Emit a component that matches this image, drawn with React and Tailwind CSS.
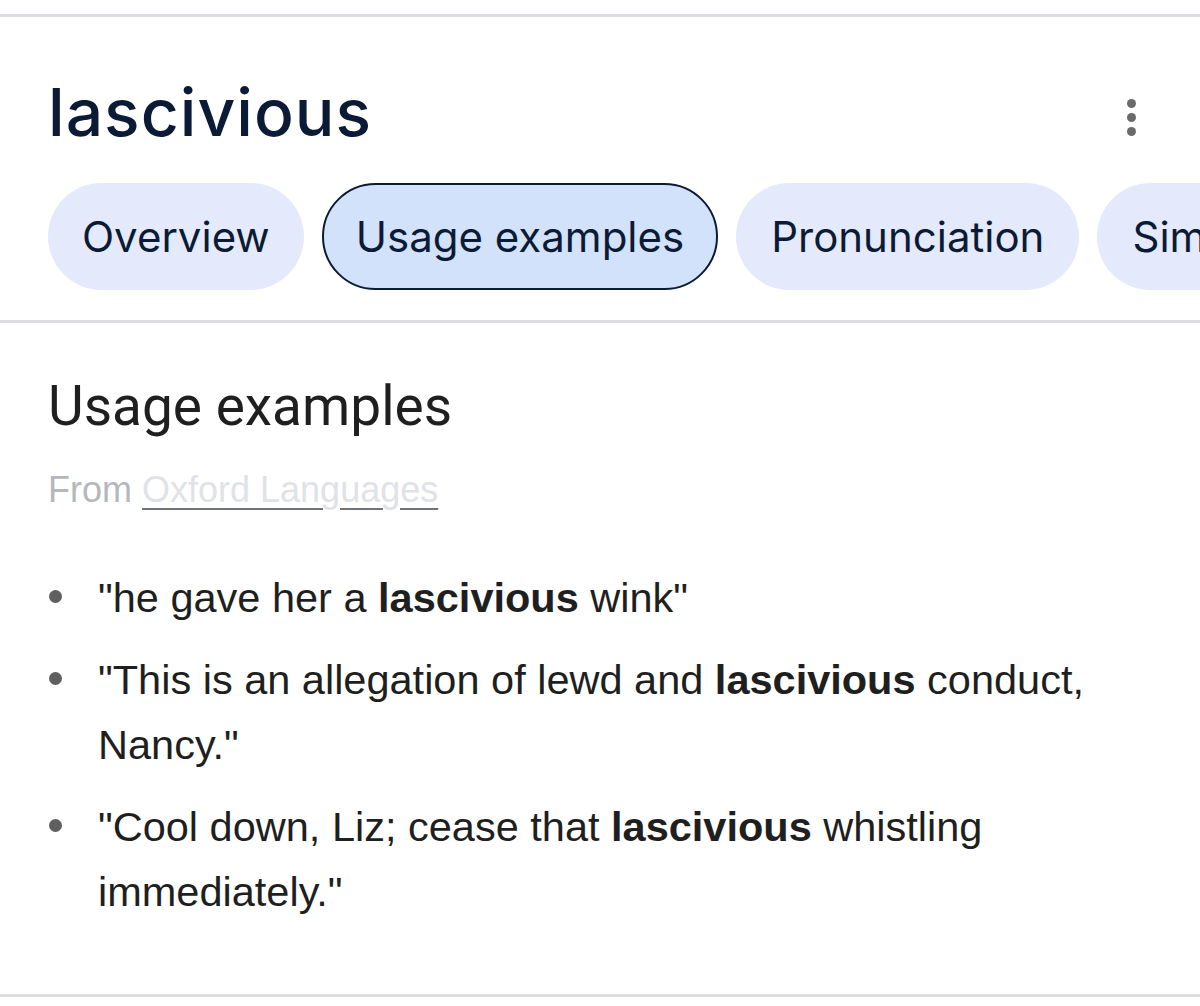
const tabs = ["Overview", "Usage examples", "Pronunciation", "Similar and opposite words"];

const examples = [
    { before: '"he gave her a ', after: ' wink"' },
    { before: '"This is an allegation of lewd and ', after: ' conduct, Nancy."' },
    { before: '"Cool down, Liz; cease that ', after: ' whistling immediately."' },
];

const Kebab = () => (
    <div className="flex flex-col items-center gap-[5px] mt-[27px] mr-[64px]">
        <span className="block w-[9px] h-[9px] rounded-full bg-[#6b6b6b]" />
        <span className="block w-[9px] h-[9px] rounded-full bg-[#6b6b6b]" />
        <span className="block w-[9px] h-[9px] rounded-full bg-[#6b6b6b]" />
    </div>
);

const App = () => {
    const active = "Usage examples";

    return (
        <div className="w-[1200px] h-[1006px] bg-white overflow-hidden">
            <div className="pt-[14px]">
                <div className="h-[3px] bg-[#dcdde0]" />
            </div>

            <div className="flex justify-between items-start pt-[55px]">
                <h1 className="pl-[48px] text-[66px] leading-[80px] font-medium text-[#0b1b35] font-['Inter',sans-serif] tracking-[1px]">
                    lascivious
                </h1>
                <Kebab />
            </div>

            <div className="flex gap-[18px] pl-[48px] mt-[31px] overflow-hidden whitespace-nowrap">
                {tabs.map((t, i) => (
                    <div
                        key={t}
                        className={
                            t === active
                                ? "shrink-0 h-[107px] flex items-center px-[32px] rounded-full border-2 border-[#0b1b35] bg-[#d3e2fb] text-[42px] text-[#0b1b35] font-['Inter',sans-serif]"
                                : i === 0
                                ? "shrink-0 h-[107px] flex items-center px-[34px] rounded-full bg-[#e4eafb] text-[42px] text-[#0b1b35] font-['Inter',sans-serif]"
                                : "shrink-0 h-[107px] flex items-center px-[35px] rounded-full bg-[#e4eafb] text-[42px] text-[#0b1b35] font-['Inter',sans-serif]"
                        }
                    >
                        {t}
                    </div>
                ))}
            </div>

            <div className="mt-[30px] h-[3px] bg-[#dcdde0]" />

            <div className="px-[48px]">
                <h2 className="mt-[51px] text-[55px] leading-[64px] text-[#1f1f1f] font-['Roboto',sans-serif]">
                    Usage examples
                </h2>
                <p className="mt-[32px] text-[36px] leading-[40px] text-[#b4b7bc] font-['Liberation_Sans',Arial,sans-serif]">
                    From{" "}
                    <span className="text-[#e0e2e7] underline decoration-[#707378] decoration-2 underline-offset-[6px]">
                        Oxford Languages
                    </span>
                </p>

                <ul className="mt-[55px] flex flex-col gap-[17px] font-['Liberation_Sans',Arial,sans-serif] text-[41.5px] leading-[65px] text-[#1f1f1f]">
                    {examples.map((e, i) => (
                        <li key={i} className="flex">
                            <span className="w-[50px] shrink-0 flex justify-start pt-[25px]">
                                <span className="block ml-[1px] w-[13px] h-[13px] rounded-full bg-[#5f5f5f]" />
                            </span>
                            <span>
                                {e.before}
                                <b className="font-bold">lascivious</b>
                                {e.after}
                            </span>
                        </li>
                    ))}
                </ul>
            </div>

            <div className="mt-[70px] h-[3px] bg-[#dcdde0]" />
        </div>
    );
};

export default App;
